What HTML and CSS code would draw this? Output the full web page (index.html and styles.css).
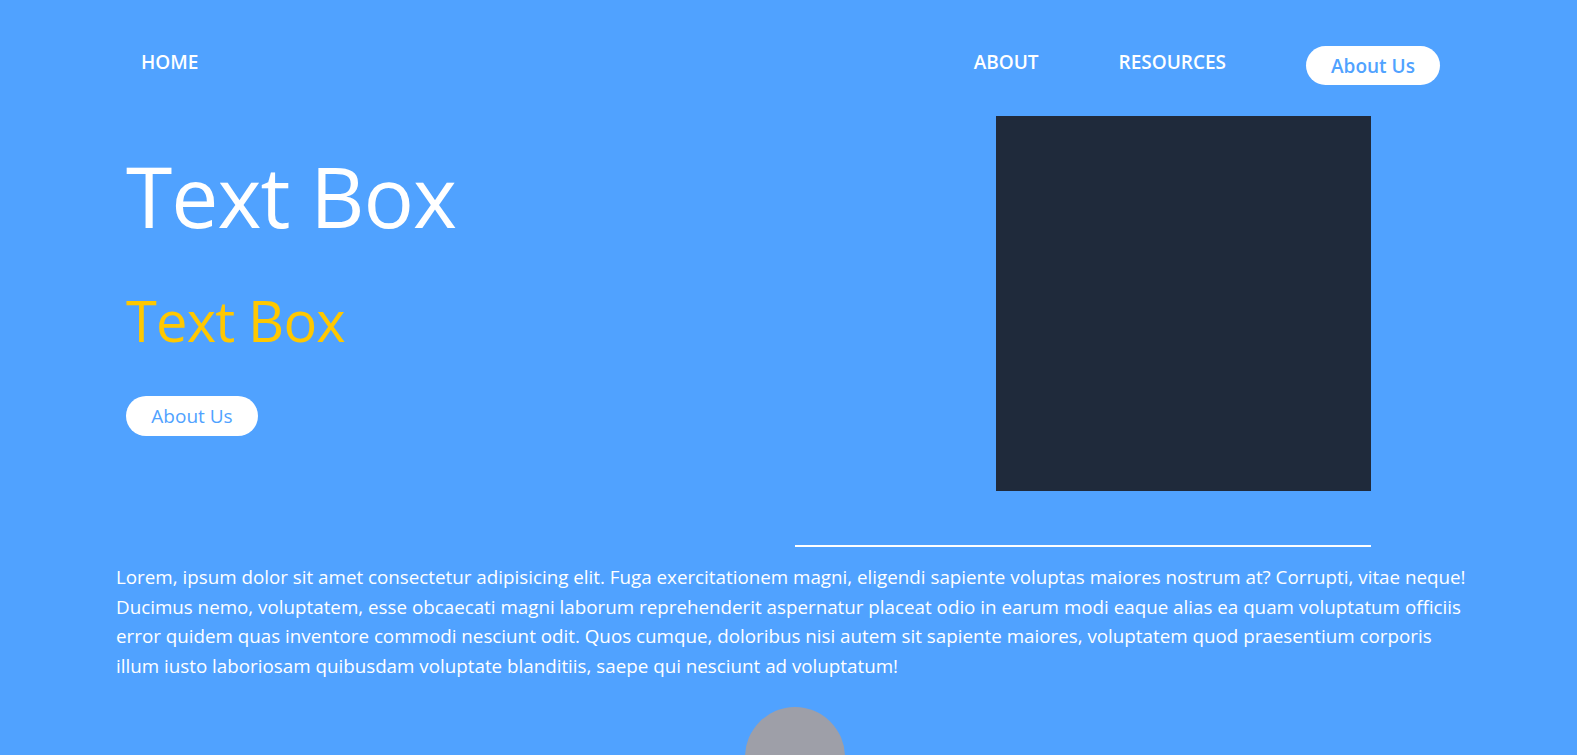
FILE: index.html
```html
<!DOCTYPE html>
<html lang="en">
<head>
<meta charset="utf-8">
<title>Text Box</title>
<link rel="stylesheet" href="styles.css">
</head>
<body>
<header class="nav">
  <a class="nav-link" href="#">HOME</a>
  <nav class="nav-right">
    <a class="nav-link" href="#">ABOUT</a>
    <a class="nav-link" href="#">RESOURCES</a>
    <a class="pill pill-nav" href="#">About Us</a>
  </nav>
</header>
<main>
  <section class="hero">
    <div class="hero-text">
      <h1 class="title">Text Box</h1>
      <h2 class="subtitle">Text Box</h2>
      <a class="pill pill-hero" href="#">About Us</a>
    </div>
    <div class="hero-box"></div>
  </section>
  <hr class="divider">
  <p class="lorem">Lorem, ipsum dolor sit amet consectetur adipisicing elit. Fuga exercitationem magni, eligendi sapiente voluptas maiores nostrum at? Corrupti, vitae neque! Ducimus nemo, voluptatem, esse obcaecati magni laborum reprehenderit aspernatur placeat odio in earum modi eaque alias ea quam voluptatum officiis error quidem quas inventore commodi nesciunt odit. Quos cumque, doloribus nisi autem sit sapiente maiores, voluptatem quod praesentium corporis illum iusto laboriosam quibusdam voluptate blanditiis, saepe qui nesciunt ad voluptatum!</p>
  <div class="circle-wrap"><div class="circle"></div></div>
</main>
</body>
</html>
```
FILE: styles.css
```css
html, body {
  margin: 0;
  padding: 0;
}
body {
  background: #50a2ff;
  color: #ffffff;
  font-family: "Open Sans", "Noto Sans", "Liberation Sans", sans-serif;
  overflow: hidden;
  height: 755px;
}
a { text-decoration: none; }

.nav {
  display: flex;
  align-items: flex-start;
  justify-content: space-between;
  padding: 46px 137px 0 141px;
  height: 39px;
}
.nav-link {
  color: #ffffff;
  font-weight: 600;
  font-size: 19px;
  line-height: 24px;
  margin-top: 4px;
}
.nav-right {
  display: flex;
  align-items: flex-start;
  gap: 80px;
}
.pill {
  display: inline-flex;
  align-items: center;
  justify-content: center;
  background: #ffffff;
  color: #50a2ff;
  border-radius: 20px;
  box-sizing: border-box;
}
.pill-nav {
  width: 134px;
  height: 39px;
  padding-top: 1px;
  font-size: 19px;
  font-weight: 600;
}

.hero {
  display: flex;
  justify-content: space-between;
  padding: 31px 206px 0 126px;
}
.hero-text {
  display: flex;
  flex-direction: column;
  align-items: flex-start;
}
.title {
  margin: 30px 0 0;
  font-weight: 400;
  font-size: 84px;
  letter-spacing: -1px;
  line-height: 100px;
}
.subtitle {
  margin: 39px 0 0;
  font-weight: 400;
  font-size: 56px;
  letter-spacing: -0.8px;
  line-height: 70px;
  color: #ffc800;
}
.pill-hero {
  width: 132px;
  height: 40px;
  font-size: 19px;
  margin-top: 41px;
  font-weight: 400;
}
.hero-box {
  width: 375px;
  height: 375px;
  background: #1f2a3b;
}
.divider {
  border: none;
  height: 2px;
  background: #ffffff;
  margin: 54px 206px 0 795px;
}
.lorem {
  margin: 16px 105px 0 116px;
  font-size: 18.8px;
  line-height: 29.6px;
}
.circle-wrap {
  padding-left: 745px;
  margin-top: 26px;
}
.circle {
  width: 100px;
  height: 100px;
  border-radius: 50%;
  background: #9e9fa8;
}
```
